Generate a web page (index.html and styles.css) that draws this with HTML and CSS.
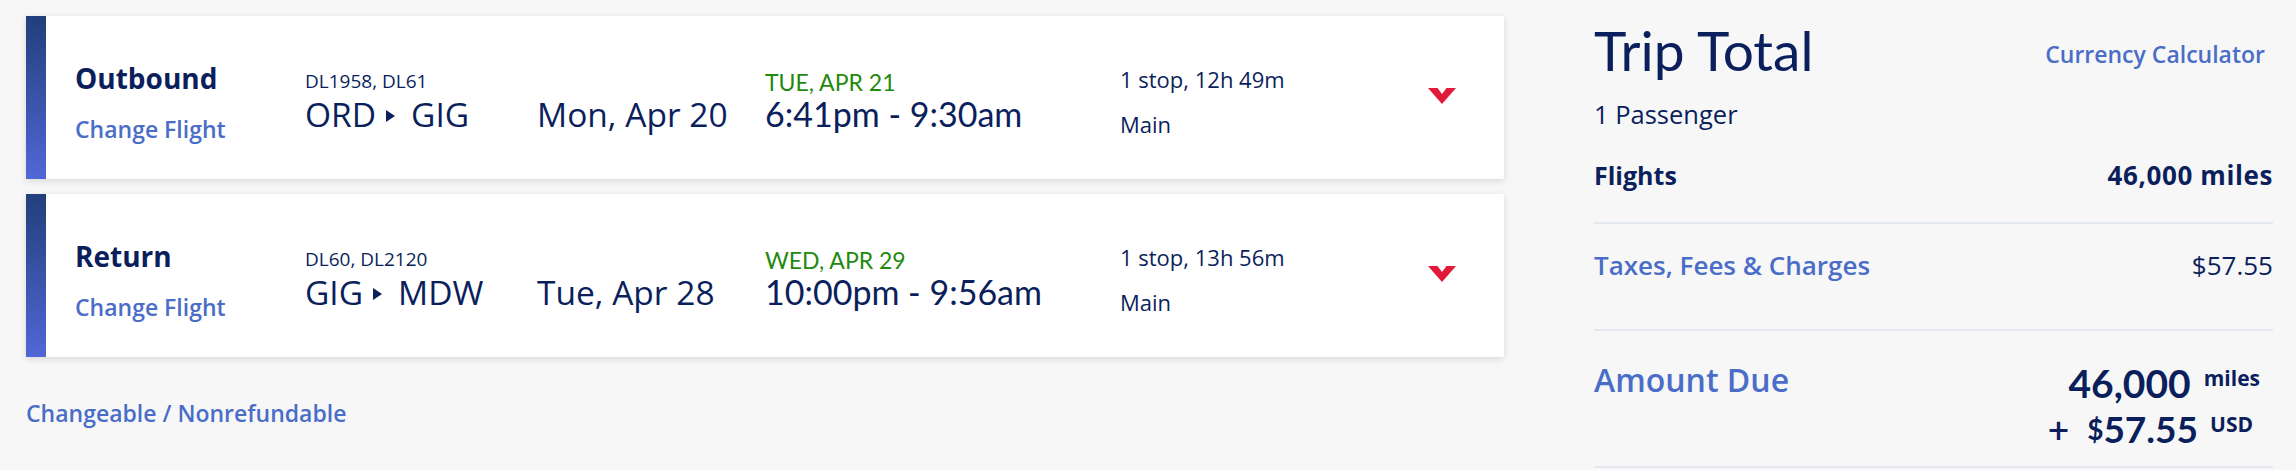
FILE: index.html
```html
<!DOCTYPE html>
<html lang="en">
<head>
<meta charset="utf-8">
<title>Trip Summary</title>
<link rel="stylesheet" href="styles.css">
</head>
<body>
<div class="page">
  <div class="flights">
    <div class="card">
      <div class="bar"></div>
      <div class="col c-type">
        <div class="type">Outbound</div>
        <div class="link change">Change Flight</div>
      </div>
      <div class="col c-route">
        <div class="small">DL1958, DL61</div>
        <div class="big">ORD<svg class="tri" width="9" height="12" viewBox="0 0 9 12"><polygon points="0,0 9,6 0,12" fill="#0b1f5c"/></svg>GIG</div>
      </div>
      <div class="col c-date">
        <div class="big">Mon, Apr 20</div>
      </div>
      <div class="col c-time">
        <div class="green">TUE, APR 21</div>
        <div class="big time">6:41pm - 9:30am</div>
      </div>
      <div class="col c-info">
        <div class="info">1 stop, 12h 49m</div>
        <div class="info cabin">Main</div>
      </div>
      <div class="col c-chev">
        <svg width="28" height="16" viewBox="0 0 28 16"><polygon points="0,0 9.5,0 14,6 18.5,0 28,0 14,16" fill="#e01a38"/></svg>
      </div>
    </div>
    <div class="card">
      <div class="bar"></div>
      <div class="col c-type">
        <div class="type">Return</div>
        <div class="link change">Change Flight</div>
      </div>
      <div class="col c-route">
        <div class="small">DL60, DL2120</div>
        <div class="big">GIG<svg class="tri" width="9" height="12" viewBox="0 0 9 12"><polygon points="0,0 9,6 0,12" fill="#0b1f5c"/></svg>MDW</div>
      </div>
      <div class="col c-date">
        <div class="big">Tue, Apr 28</div>
      </div>
      <div class="col c-time">
        <div class="green">WED, APR 29</div>
        <div class="big time">10:00pm - 9:56am</div>
      </div>
      <div class="col c-info">
        <div class="info">1 stop, 13h 56m</div>
        <div class="info cabin">Main</div>
      </div>
      <div class="col c-chev">
        <svg width="28" height="16" viewBox="0 0 28 16"><polygon points="0,0 9.5,0 14,6 18.5,0 28,0 14,16" fill="#e01a38"/></svg>
      </div>
    </div>
    <div class="link policy">Changeable / Nonrefundable</div>
  </div>

  <div class="total">
    <div class="head">
      <div class="title">Trip Total</div>
      <div class="link calc">Currency Calculator</div>
    </div>
    <div class="pax">1 Passenger</div>
    <div class="row r-flights">
      <div class="label">Flights</div>
      <div class="value strong">46,000 miles</div>
    </div>
    <div class="row r-taxes">
      <div class="link label">Taxes, Fees &amp; Charges</div>
      <div class="value">$57.55</div>
    </div>
    <div class="row r-due">
      <div class="link due">Amount Due</div>
      <div class="amount">
        <div class="amt-line l1">46,000<span class="unit">miles</span></div>
        <div class="amt-line l2"><span class="plus">+</span><span class="dollar">$</span>57.55<span class="unit usd">USD</span></div>
      </div>
    </div>
  </div>
</div>
</body>
</html>
```

FILE: styles.css
```css
* { box-sizing: border-box; }

body {
  margin: 0;
  background: #f7f7f7;
  font-family: "Open Sans", "Noto Sans", "Liberation Sans", sans-serif;
  color: #0b1f5c;
}

.page {
  display: flex;
  align-items: flex-start;
  padding: 16px 0 0 26px;
}

.flights {
  width: 1478px;
  flex: none;
}

.card {
  display: flex;
  align-items: flex-start;
  height: 163px;
  background: #fff;
  box-shadow: 0 2px 7px rgba(0, 0, 0, 0.13);
  margin-bottom: 15px;
  padding-right: 48px;
}

.bar {
  width: 20px;
  height: 100%;
  flex: none;
  background: linear-gradient(to bottom, #213f7b, #5167d6);
  margin-right: 29px;
}

.col { flex: none; }

.c-type { width: 230px; padding-top: 45px; }
.c-route { width: 232px; padding-top: 54px; }
.c-date { width: 228px; padding-top: 80px; }
.c-time { width: 355px; padding-top: 54px; }
.c-info { flex: 1; padding-top: 50px; }
.c-chev { width: 28px; padding-top: 72px; line-height: 0; }

.type {
  font-size: 28px;
  line-height: 34px;
  font-weight: 700;
}

.link {
  color: #4a6dc8;
  font-weight: 600;
}

.change {
  font-size: 23px;
  line-height: 28px;
  margin-top: 20px;
}

.small {
  font-size: 19px;
  line-height: 22px;
  margin-bottom: 4px;
}

.big {
  font-size: 33.5px;
  line-height: 36px;
  white-space: nowrap;
}

.time {
  font-family: Lato, "Open Sans", sans-serif;
  font-size: 34px;
  margin-top: 2px;
}

.tri {
  vertical-align: 5px;
  margin: 0 16px 0 10px;
}

.green {
  font-family: Lato, "Open Sans", sans-serif;
  color: #1f8a0e;
  font-size: 23px;
  line-height: 24px;
}

.info {
  font-size: 22px;
  line-height: 26px;
}

.cabin { margin-top: 19px; }

.policy {
  font-size: 23px;
  line-height: 28px;
  margin-top: 42px;
}

/* Trip total */
.total {
  width: 679px;
  flex: none;
  margin-left: 90px;
}

.head {
  display: flex;
  justify-content: space-between;
  align-items: flex-start;
  margin-top: 2px;
}

.title {
  font-family: Lato, "Open Sans", sans-serif;
  font-size: 55px;
  line-height: 64px;
  font-weight: 400;
}

.calc {
  font-size: 23px;
  line-height: 28px;
  margin-top: 22px;
  margin-right: 8px;
}

.pax {
  font-size: 25.5px;
  line-height: 30px;
  margin-top: 17px;
}

.row {
  display: flex;
  justify-content: space-between;
  align-items: flex-start;
  border-bottom: 2px solid #e3e8f1;
}

.row .label,
.row .value {
  font-size: 26px;
  line-height: 30px;
}

.r-flights {
  margin-top: 31px;
  padding-bottom: 32px;
}

.r-flights .label { font-weight: 700; font-size: 25px; }
.strong { font-weight: 700; letter-spacing: 0.6px; }

.r-taxes {
  padding-top: 26px;
  padding-bottom: 49px;
}

.r-due {
  padding-top: 29px;
  padding-bottom: 14px;
}

.due {
  font-size: 32px;
  line-height: 40px;
}

.amount { text-align: right; }

.amt-line {
  font-family: Lato, "Open Sans", sans-serif;
  font-size: 37px;
  line-height: 46px;
  font-weight: 700;
  white-space: nowrap;
}

.l1 { font-size: 39px; padding-right: 13px; }
.l2 { padding-right: 20px; }

.unit {
  font-family: "Open Sans", sans-serif;
  font-size: 21px;
  line-height: 1;
  vertical-align: 12px;
  margin-left: 13px;
}

.usd { vertical-align: 11px; margin-left: 12px; }

.plus {
  font-weight: 600;
  margin-right: 18px;
}

.dollar {
  font-size: 28px;
  line-height: 1;
  vertical-align: 3px;
}
```
